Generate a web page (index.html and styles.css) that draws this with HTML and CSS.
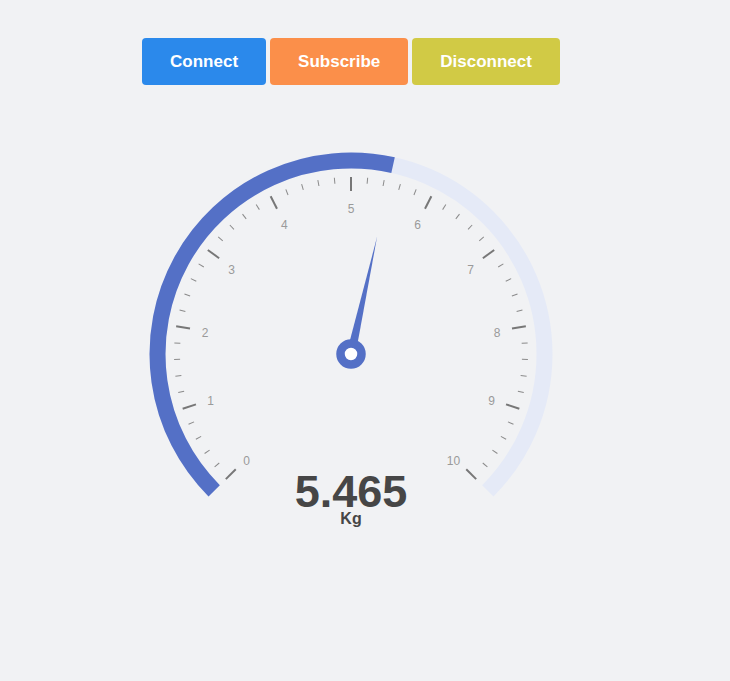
FILE: index.html
```html
<!DOCTYPE html>
<html>
<head>
<meta charset="utf-8">
<title>Scale</title>
<link rel="stylesheet" href="styles.css">
</head>
<body>
<div class="page">
  <div class="actions">
    <button class="btn btn-connect">Connect</button>
    <button class="btn btn-subscribe">Subscribe</button>
    <button class="btn btn-disconnect">Disconnect</button>
  </div>
  <svg class="gauge" width="702" height="480" viewBox="0 0 702 480">
    <g transform="translate(351 255)">
      <path class="track" d="M -136.82 136.82 A 193.5 193.5 0 1 1 136.82 136.82"/>
      <path class="progress" d="M -136.82 136.82 A 193.5 193.5 0 0 1 42.06 -188.87"/>
      <g class="minor">
        <line x1="0" y1="-171" x2="0" y2="-177" transform="rotate(-129.6)"/>
        <line x1="0" y1="-171" x2="0" y2="-177" transform="rotate(-124.2)"/>
        <line x1="0" y1="-171" x2="0" y2="-177" transform="rotate(-118.8)"/>
        <line x1="0" y1="-171" x2="0" y2="-177" transform="rotate(-113.4)"/>
        <line x1="0" y1="-171" x2="0" y2="-177" transform="rotate(-102.6)"/>
        <line x1="0" y1="-171" x2="0" y2="-177" transform="rotate(-97.2)"/>
        <line x1="0" y1="-171" x2="0" y2="-177" transform="rotate(-91.8)"/>
        <line x1="0" y1="-171" x2="0" y2="-177" transform="rotate(-86.4)"/>
        <line x1="0" y1="-171" x2="0" y2="-177" transform="rotate(-75.6)"/>
        <line x1="0" y1="-171" x2="0" y2="-177" transform="rotate(-70.2)"/>
        <line x1="0" y1="-171" x2="0" y2="-177" transform="rotate(-64.8)"/>
        <line x1="0" y1="-171" x2="0" y2="-177" transform="rotate(-59.4)"/>
        <line x1="0" y1="-171" x2="0" y2="-177" transform="rotate(-48.6)"/>
        <line x1="0" y1="-171" x2="0" y2="-177" transform="rotate(-43.2)"/>
        <line x1="0" y1="-171" x2="0" y2="-177" transform="rotate(-37.8)"/>
        <line x1="0" y1="-171" x2="0" y2="-177" transform="rotate(-32.4)"/>
        <line x1="0" y1="-171" x2="0" y2="-177" transform="rotate(-21.6)"/>
        <line x1="0" y1="-171" x2="0" y2="-177" transform="rotate(-16.2)"/>
        <line x1="0" y1="-171" x2="0" y2="-177" transform="rotate(-10.8)"/>
        <line x1="0" y1="-171" x2="0" y2="-177" transform="rotate(-5.4)"/>
        <line x1="0" y1="-171" x2="0" y2="-177" transform="rotate(5.4)"/>
        <line x1="0" y1="-171" x2="0" y2="-177" transform="rotate(10.8)"/>
        <line x1="0" y1="-171" x2="0" y2="-177" transform="rotate(16.2)"/>
        <line x1="0" y1="-171" x2="0" y2="-177" transform="rotate(21.6)"/>
        <line x1="0" y1="-171" x2="0" y2="-177" transform="rotate(32.4)"/>
        <line x1="0" y1="-171" x2="0" y2="-177" transform="rotate(37.8)"/>
        <line x1="0" y1="-171" x2="0" y2="-177" transform="rotate(43.2)"/>
        <line x1="0" y1="-171" x2="0" y2="-177" transform="rotate(48.6)"/>
        <line x1="0" y1="-171" x2="0" y2="-177" transform="rotate(59.4)"/>
        <line x1="0" y1="-171" x2="0" y2="-177" transform="rotate(64.8)"/>
        <line x1="0" y1="-171" x2="0" y2="-177" transform="rotate(70.2)"/>
        <line x1="0" y1="-171" x2="0" y2="-177" transform="rotate(75.6)"/>
        <line x1="0" y1="-171" x2="0" y2="-177" transform="rotate(86.4)"/>
        <line x1="0" y1="-171" x2="0" y2="-177" transform="rotate(91.8)"/>
        <line x1="0" y1="-171" x2="0" y2="-177" transform="rotate(97.2)"/>
        <line x1="0" y1="-171" x2="0" y2="-177" transform="rotate(102.6)"/>
        <line x1="0" y1="-171" x2="0" y2="-177" transform="rotate(113.4)"/>
        <line x1="0" y1="-171" x2="0" y2="-177" transform="rotate(118.8)"/>
        <line x1="0" y1="-171" x2="0" y2="-177" transform="rotate(124.2)"/>
        <line x1="0" y1="-171" x2="0" y2="-177" transform="rotate(129.6)"/>
      </g>
      <g class="major">
        <line x1="0" y1="-163" x2="0" y2="-177" transform="rotate(-135)"/>
        <line x1="0" y1="-163" x2="0" y2="-177" transform="rotate(-108)"/>
        <line x1="0" y1="-163" x2="0" y2="-177" transform="rotate(-81)"/>
        <line x1="0" y1="-163" x2="0" y2="-177" transform="rotate(-54)"/>
        <line x1="0" y1="-163" x2="0" y2="-177" transform="rotate(-27)"/>
        <line x1="0" y1="-163" x2="0" y2="-177" transform="rotate(0)"/>
        <line x1="0" y1="-163" x2="0" y2="-177" transform="rotate(27)"/>
        <line x1="0" y1="-163" x2="0" y2="-177" transform="rotate(54)"/>
        <line x1="0" y1="-163" x2="0" y2="-177" transform="rotate(81)"/>
        <line x1="0" y1="-163" x2="0" y2="-177" transform="rotate(108)"/>
        <line x1="0" y1="-163" x2="0" y2="-177" transform="rotate(135)"/>
      </g>
      <g class="labels" transform="translate(0 2)">
        <text x="-104.5" y="104.5">0</text>
        <text x="-140.5" y="45.4">1</text>
        <text x="-146" y="-23.0">2</text>
        <text x="-119.5" y="-86.4">3</text>
        <text x="-66.7" y="-131.0">4</text>
        <text x="0" y="-147">5</text>
        <text x="66.7" y="-131.0">6</text>
        <text x="119.5" y="-86.4">7</text>
        <text x="146" y="-23.0">8</text>
        <text x="140.5" y="45.4">9</text>
        <text x="102.5" y="104.5">10</text>
      </g>
      <polygon class="needle" points="-4.5,0 0,-120 4.5,0" transform="rotate(12.555)"/>
      <circle class="anchor" cx="0" cy="0" r="10.5"/>
      <text class="value" x="0" y="153">5.465</text>
      <text class="unit" x="0" y="170">Kg</text>
    </g>
  </svg>
</div>
</body>
</html>
```
FILE: styles.css
```css
html, body {
  margin: 0;
  padding: 0;
  background: #f1f2f4;
  font-family: "Liberation Sans", Arial, sans-serif;
}

.page {
  width: 702px;
}

.actions {
  display: flex;
  justify-content: center;
  gap: 4px;
  padding-top: 38px;
}

.btn {
  height: 47px;
  padding: 1px 28px 0;
  border: none;
  border-radius: 4px;
  color: #ffffff;
  font-family: "Liberation Sans", Arial, sans-serif;
  font-weight: bold;
  font-size: 17px;
  cursor: pointer;
}

.btn-connect { background: #2b89eb; }
.btn-subscribe { background: #fb8f4a; }
.btn-disconnect { background: #d1ca45; }

.gauge {
  display: block;
  margin-top: 14px;
}

.track {
  fill: none;
  stroke: #e5eaf7;
  stroke-width: 16;
}

.progress {
  fill: none;
  stroke: #5470c6;
  stroke-width: 16;
}

.minor line {
  stroke: #8a8a8a;
  stroke-width: 1;
}

.major line {
  stroke: #777777;
  stroke-width: 2;
}

.labels text {
  fill: #9a9a9a;
  font-size: 12px;
  text-anchor: middle;
  dominant-baseline: central;
}

.needle {
  fill: #5470c6;
}

.anchor {
  fill: #ffffff;
  stroke: #5470c6;
  stroke-width: 8.5;
}

.value {
  fill: #464646;
  font-size: 45px;
  font-weight: bold;
  text-anchor: middle;
}

.unit {
  fill: #464646;
  font-size: 16px;
  font-weight: bold;
  text-anchor: middle;
}
```
